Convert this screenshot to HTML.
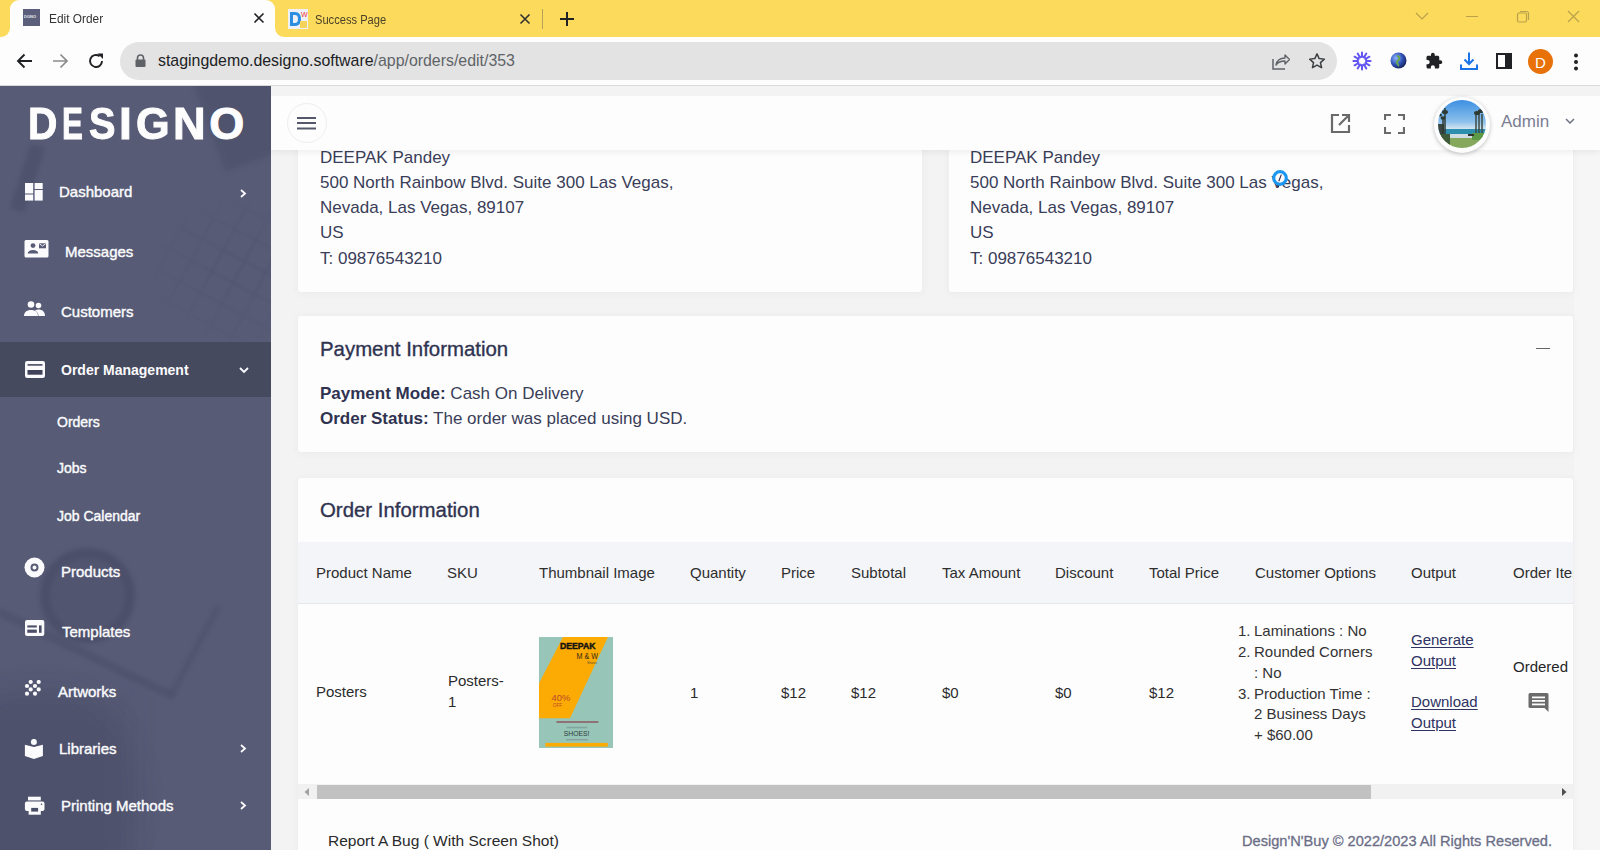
<!DOCTYPE html>
<html><head><meta charset="utf-8">
<style>
*{box-sizing:border-box;margin:0;padding:0}
html,body{width:1600px;height:850px;overflow:hidden;font-family:"Liberation Sans",sans-serif;background:#f3f3f4}
.abs{position:absolute}
.t{position:absolute;white-space:nowrap;line-height:1}
#tabbar{position:absolute;left:0;top:0;width:1600px;height:37px;background:#fcda5c}
#tab1{position:absolute;left:10px;top:0px;width:265px;height:37px;background:#fdfdfd;border-radius:9px 9px 0 0}
#tab1:before,#tab1:after{content:"";position:absolute;bottom:0;width:10px;height:10px;background:transparent}
#tab1:before{left:-10px;border-bottom-right-radius:9px;box-shadow:4px 4px 0 4px #fdfdfd}
#tab1:after{right:-10px;border-bottom-left-radius:9px;box-shadow:-4px 4px 0 4px #fdfdfd}
.tabtitle{position:absolute;font-size:12.5px;color:#333;top:12px;line-height:1}
#toolbar{position:absolute;left:0;top:37px;width:1600px;height:49px;background:#fdfdfd;border-bottom:1px solid #d9d9d9}
#omni{position:absolute;left:120px;top:5px;width:1217px;height:38px;background:#e3e3e3;border-radius:19px}
#url{position:absolute;left:38px;top:11px;font-size:15.9px;color:#202124;line-height:1}
#url span{color:#5f6368}
#sidebar{position:absolute;left:0;top:86px;width:271px;height:764px;background:#575b76;overflow:hidden}
.dl{position:absolute;top:15px;font-size:45px;font-weight:bold;line-height:1;color:#fdfdfd;-webkit-text-stroke:1px #fdfdfd;transform-origin:0 0}
.nl{position:absolute;color:#fbfbfd;font-size:15px;line-height:1;white-space:nowrap;-webkit-text-stroke:0.4px #fbfbfd}
#main{position:absolute;left:271px;top:86px;width:1329px;height:764px;background:#f3f3f4;overflow:hidden}
.card{position:absolute;background:#fdfdfe;border-radius:3px;box-shadow:0 1px 8px rgba(60,60,80,0.05)}
.addr{position:absolute;font-size:17px;color:#3a3e58;line-height:25px;white-space:nowrap}
#header{position:absolute;left:0;top:10px;width:1329px;height:54px;background:#fdfdfd;box-shadow:0 3px 5px rgba(0,0,0,0.05)}
.ttl{position:absolute;font-size:20.4px;color:#2f3350;line-height:1;white-space:nowrap;-webkit-text-stroke:0.35px #2f3350}
.th{position:absolute;font-size:15px;color:#2e2e2e;line-height:1;white-space:nowrap;top:0;margin:-1px 0 0 0}
.td{position:absolute;font-size:15px;color:#2b2b2b;line-height:1;white-space:nowrap}
.lnk{position:absolute;font-size:15px;color:#2e3361;line-height:1;white-space:nowrap;text-decoration:underline;text-underline-offset:2px}
</style></head><body>
<!-- ===== Browser tab bar ===== -->
<div id="tabbar">
  <div id="tab1">
    <div class="abs" style="left:13px;top:9px;width:17px;height:17px;background:#5b5f7c"></div>
    <div class="abs" style="left:14px;top:15px;font-size:4px;color:#e8e8f0;font-weight:bold;line-height:1">DGNO</div>
    <div class="tabtitle" style="left:39px;top:13px;transform:scaleX(0.95);transform-origin:0 0">Edit Order</div>
    <svg class="abs" style="left:243px;top:12px" width="12" height="12" viewBox="0 0 12 12"><path d="M1.5 1.5L10.5 10.5M10.5 1.5L1.5 10.5" stroke="#202124" stroke-width="1.6"/></svg>
  </div>
  <svg class="abs" style="left:288px;top:9px" width="20" height="20" viewBox="0 0 20 20">
    <rect x="0" y="0" width="20" height="20" fill="#eef1f7"/>
    <path d="M2 3h5c4 0 6 3 6 7s-2 7-6 7H2z" fill="#2c8ee0"/>
    <path d="M5 6h2c2 0 3 1.5 3 4s-1 4-3 4H5z" fill="#eef1f7"/>
    <text x="13" y="8" font-size="7" fill="#e33" font-family="Liberation Sans">W</text>
    <rect x="12" y="12" width="7" height="7" fill="#f5d35a"/>
  </svg>
  <div class="tabtitle" style="left:315px;top:13.5px;color:#4a4128;transform:scaleX(0.89);transform-origin:0 0">Success Page</div>
  <svg class="abs" style="left:519px;top:13px" width="12" height="12" viewBox="0 0 12 12"><path d="M1.5 1.5L10.5 10.5M10.5 1.5L1.5 10.5" stroke="#333" stroke-width="1.6"/></svg>
  <div class="abs" style="left:542px;top:9px;width:1px;height:20px;background:#b5a35a"></div>
  <svg class="abs" style="left:560px;top:12px" width="14" height="14" viewBox="0 0 14 14"><path d="M7 0V14M0 7H14" stroke="#202124" stroke-width="2"/></svg>
  <!-- window controls -->
  <svg class="abs" style="left:1415px;top:12px" width="14" height="9" viewBox="0 0 14 9"><path d="M1 1L7 7L13 1" stroke="#b9a24a" stroke-width="1.2" fill="none"/></svg>
  <div class="abs" style="left:1466px;top:16px;width:12px;height:1px;background:#b9a24a"></div>
  <svg class="abs" style="left:1516px;top:10px" width="14" height="14" viewBox="0 0 14 14"><rect x="1.5" y="3" width="9" height="9" rx="1.5" stroke="#b9a24a" stroke-width="1.2" fill="none"/><path d="M4 1.5h6.5a2 2 0 0 1 2 2V10" stroke="#b9a24a" stroke-width="1.2" fill="none"/></svg>
  <svg class="abs" style="left:1567px;top:10px" width="13" height="13" viewBox="0 0 13 13"><path d="M1 1L12 12M12 1L1 12" stroke="#b9a24a" stroke-width="1.2"/></svg>
</div>
<!-- ===== Toolbar ===== -->
<div id="toolbar">
  <svg class="abs" style="left:16px;top:16px" width="17" height="16" viewBox="0 0 17 16"><path d="M16 8H2M8.5 1.5L2 8l6.5 6.5" stroke="#202124" stroke-width="1.9" fill="none"/></svg>
  <svg class="abs" style="left:52px;top:16px" width="17" height="16" viewBox="0 0 17 16"><path d="M1 8H15M8.5 1.5L15 8l-6.5 6.5" stroke="#8a8a8a" stroke-width="1.7" fill="none"/></svg>
  <svg class="abs" style="left:87px;top:15px" width="18" height="18" viewBox="0 0 18 18"><path d="M15 9A6 6 0 1 1 12.6 4.2" stroke="#202124" stroke-width="1.9" fill="none"/><path d="M10.5 1.5L16 1.5L16 7z" fill="#202124"/></svg>
  <div id="omni">
    <svg class="abs" style="left:15px;top:12px" width="11" height="13" viewBox="0 0 11 13"><path d="M2.5 6V4a3 3 0 0 1 6 0v2" stroke="#5f6368" stroke-width="1.6" fill="none"/><rect x="0.5" y="5.5" width="10" height="7.5" rx="1" fill="#5f6368"/></svg>
    <div id="url">stagingdemo.designo.software<span>/app/orders/edit/353</span></div>
    <svg class="abs" style="left:1152px;top:11px" width="18" height="17" viewBox="0 0 18 17"><path d="M1 6v10h12" stroke="#5f6368" stroke-width="1.5" fill="none"/><path d="M4 12c1-5 5-7 9-7V2l4.5 4.5L13 11V8c-4 0-7 1-9 4z" stroke="#5f6368" stroke-width="1.4" fill="none" stroke-linejoin="round"/></svg>
    <svg class="abs" style="left:1188px;top:10px" width="18" height="18" viewBox="0 0 24 24"><path d="M12 2.5l2.9 6.3 6.9.7-5.2 4.6 1.5 6.8L12 17.4l-6.1 3.5 1.5-6.8-5.2-4.6 6.9-.7z" stroke="#3c4043" stroke-width="2" fill="none" stroke-linejoin="round"/></svg>
  </div>
  <!-- extension icons -->
  <svg class="abs" style="left:1352px;top:14px" width="20" height="20" viewBox="0 0 20 20"><path d="M14.00 10.00L18.60 10.00M13.46 12.00L17.45 14.30M12.00 13.46L14.30 17.45M10.00 14.00L10.00 18.60M8.00 13.46L5.70 17.45M6.54 12.00L2.55 14.30M6.00 10.00L1.40 10.00M6.54 8.00L2.55 5.70M8.00 6.54L5.70 2.55M10.00 6.00L10.00 1.40M12.00 6.54L14.30 2.55M13.46 8.00L17.45 5.70" stroke="#6355f2" stroke-width="2" stroke-linecap="round"/><circle cx="10" cy="10" r="4.6" stroke="#6355f2" stroke-width="1.6" fill="none"/></svg>
  <svg class="abs" style="left:1390px;top:15px" width="17" height="17" viewBox="0 0 17 17"><defs><radialGradient id="gl" cx="35%" cy="35%" r="70%"><stop offset="0" stop-color="#8fb4ff"/><stop offset="0.6" stop-color="#2e4fb5"/><stop offset="1" stop-color="#17245a"/></radialGradient></defs><circle cx="8.5" cy="8.5" r="8" fill="url(#gl)"/><path d="M7 4c2 0 3 2 2 3.5S6 9 7 11s2 2 1 3" stroke="#6aa84f" stroke-width="2" fill="none"/></svg>
  <svg class="abs" style="left:1425px;top:15px" width="18" height="18" viewBox="0 0 24 24"><path d="M20.5 11H19V7c0-1.1-.9-2-2-2h-4V3.5C13 2.1 11.9 1 10.5 1S8 2.1 8 3.5V5H4c-1.1 0-2 .9-2 2v3.8h1.5c1.5 0 2.7 1.2 2.7 2.7S5 16.2 3.5 16.2H2V20c0 1.1.9 2 2 2h3.8v-1.5c0-1.500 1.200-2.700 2.700-2.700s2.700 1.200 2.700 2.700V22H17c1.1 0 2-.9 2-2v-4h1.5c1.4 0 2.500-1.100 2.500-2.500S21.900 11 20.500 11z" fill="#202124"/></svg>
  <svg class="abs" style="left:1459px;top:14px" width="20" height="20" viewBox="0 0 20 20"><path d="M10 1.5v11M5.5 8.5L10 13l4.5-4.5" stroke="#1a73e8" stroke-width="2" fill="none"/><path d="M2 13.5v4.5h16v-4.5" stroke="#1a73e8" stroke-width="2" fill="none"/></svg>
  <svg class="abs" style="left:1496px;top:16px" width="16" height="16" viewBox="0 0 16 16"><rect x="1" y="1" width="14" height="14" stroke="#202124" stroke-width="2" fill="none"/><rect x="9" y="1" width="6" height="14" fill="#202124"/></svg>
  <div class="abs" style="left:1528px;top:12px;width:25px;height:25px;border-radius:50%;background:#e8710a"></div>
  <div class="t" style="left:1535px;top:18px;font-size:15px;color:#fff">D</div>
  <svg class="abs" style="left:1573px;top:16px" width="6" height="18" viewBox="0 0 6 18"><circle cx="3" cy="2.5" r="2" fill="#202124"/><circle cx="3" cy="9" r="2" fill="#202124"/><circle cx="3" cy="15.5" r="2" fill="#202124"/></svg>
</div>
<!-- ===== Sidebar ===== -->
<div id="sidebar">
  <div class="abs" style="left:205px;top:-30px;width:110px;height:100px;background:rgba(35,38,62,0.15);transform:rotate(-20deg);filter:blur(3px)"></div>
  <div class="abs" style="left:150px;top:110px;width:130px;height:150px;background:repeating-linear-gradient(28deg,transparent 0 22px,rgba(35,38,62,0.07) 22px 24px),repeating-linear-gradient(-62deg,transparent 0 22px,rgba(35,38,62,0.07) 22px 24px);filter:blur(0.8px);-webkit-mask-image:radial-gradient(ellipse at 70% 50%,#000 20%,transparent 70%)"></div>
  <div class="abs" style="left:20px;top:58px;width:15px;height:68px;background:rgba(35,38,62,0.17);transform:rotate(18deg);filter:blur(2.5px)"></div>
  <div class="abs" style="left:40px;top:462px;width:95px;height:95px;border-radius:50%;border:10px solid rgba(35,38,62,0.13);background:rgba(35,38,62,0.10);filter:blur(2px)"></div>
  <div class="abs" style="left:0px;top:522px;width:196px;height:8px;background:rgba(35,38,62,0.15);transform:rotate(25.8deg);transform-origin:0 0;filter:blur(2px)"></div>
  <div class="abs" style="left:222px;top:521px;width:100px;height:7px;background:rgba(35,38,62,0.12);transform:rotate(118deg);transform-origin:0 0;filter:blur(2px)"></div>
  <div class="abs" style="left:-30px;top:610px;width:160px;height:240px;background:rgba(35,38,62,0.08);filter:blur(14px)"></div>
  
  <div class="abs" style="left:-60px;top:600px;width:200px;height:220px;border-radius:50%;background:rgba(35,38,62,0.10);filter:blur(12px)"></div>
  <div class="abs" style="left:0;top:256px;width:271px;height:55px;background:#464a5f"></div>
  <div class="dl" style="left:28.1px;transform:scaleX(0.903)">D</div>
<div class="dl" style="left:62.2px;transform:scaleX(0.696)">E</div>
<div class="dl" style="left:89.0px;transform:scaleX(0.882)">S</div>
<div class="dl" style="left:119.4px;transform:scaleX(1.025)">I</div>
<div class="dl" style="left:135.8px;transform:scaleX(0.961)">G</div>
<div class="dl" style="left:173.0px;transform:scaleX(1.004)">N</div>
<div class="dl" style="left:209.3px;transform:scaleX(1.000)">O</div>
  <!-- Dashboard -->
  <svg class="abs" style="left:25px;top:97px" width="18" height="18" viewBox="0 0 18 18" fill="#fbfbfd"><rect x="0" y="0" width="8.2" height="10.5"/><rect x="0" y="11.5" width="8.2" height="6.1"/><rect x="9.6" y="0" width="8.1" height="6"/><rect x="9.6" y="7" width="8.1" height="10.6"/></svg>
  <div class="nl" style="left:59px;top:98px">Dashboard</div>
  <svg class="abs" style="left:240px;top:103px" width="7" height="9" viewBox="0 0 7 9"><path d="M1 1l4 3.5L1 8" stroke="#fbfbfd" stroke-width="1.8" fill="none"/></svg>
  <!-- Messages -->
  <svg class="abs" style="left:24px;top:154px" width="25" height="18" viewBox="0 0 25 18"><rect x="0.5" y="0" width="24" height="17.5" rx="1.5" fill="#fbfbfd"/><circle cx="9" cy="5.6" r="2.4" fill="#575b76"/><path d="M3.7 13.6c0-2.400 2.400-3.600 5.300-3.600s5.300 1.200 5.300 3.600z" fill="#575b76"/><rect x="15" y="3.3" width="7" height="5" fill="#575b76"/><path d="M15.3 3.700l3.200 2.300 3.200-2.300" stroke="#fbfbfd" stroke-width="0.9" fill="none"/></svg>
  <div class="nl" style="left:65px;top:158px">Messages</div>
  <!-- Customers -->
  <svg class="abs" style="left:24px;top:215px" width="21" height="15" viewBox="0 0 21 15" fill="#fbfbfd"><circle cx="7" cy="3.5" r="3.3"/><circle cx="14.5" cy="4.5" r="2.8"/><path d="M0 15c0-4 3-6 7-6s7 2 7 6z"/><path d="M11 9.5c1-.6 2.200-.9 3.500-.9 3.500 0 6.500 2 6.500 6.400h-6.500c0-2-1-4-3.500-5.500z"/></svg>
  <div class="nl" style="left:61px;top:218px">Customers</div>
  <!-- Order Management -->
  <svg class="abs" style="left:25px;top:275px" width="20" height="17" viewBox="0 0 20 17"><rect x="0" y="0" width="20" height="17" rx="2.2" fill="#fbfbfd"/><rect x="2.5" y="3" width="15" height="1.8" fill="#5c5f72"/><rect x="2.5" y="9" width="15" height="4.7" fill="#3f4259"/></svg>
  <div class="nl" style="left:61px;top:277px;font-size:14px;font-weight:bold;-webkit-text-stroke:0">Order Management</div>
  <svg class="abs" style="left:239px;top:281px" width="10" height="7" viewBox="0 0 10 7"><path d="M1 1l4 4 4-4" stroke="#fbfbfd" stroke-width="1.8" fill="none"/></svg>
  <div class="nl" style="left:57px;top:329px;font-size:14px">Orders</div>
  <div class="nl" style="left:57px;top:375px;font-size:14px">Jobs</div>
  <div class="nl" style="left:57px;top:423px;font-size:14px">Job Calendar</div>
  <!-- Products -->
  <svg class="abs" style="left:24px;top:471px" width="21" height="21" viewBox="0 0 21 21"><circle cx="10.5" cy="10.5" r="10" fill="#fbfbfd"/><circle cx="10.5" cy="10.5" r="3" stroke="#575b76" stroke-width="2" fill="none"/></svg>
  <div class="nl" style="left:61px;top:478px">Products</div>
  <!-- Templates -->
  <svg class="abs" style="left:25px;top:534px" width="20" height="16" viewBox="0 0 20 16"><rect x="0" y="0" width="19.3" height="16" rx="2" fill="#fbfbfd"/><rect x="2.3" y="5.4" width="9.5" height="2.1" fill="#4a4e66"/><rect x="2.3" y="9.6" width="9.5" height="3.2" fill="#4a4e66"/><rect x="14" y="5.4" width="2.6" height="7.4" fill="#4a4e66"/></svg>
  <div class="nl" style="left:62px;top:538px">Templates</div>
  <!-- Artworks -->
  <svg class="abs" style="left:24px;top:594px" width="18" height="16" viewBox="0 0 18 16" fill="#fbfbfd"><circle cx="6.7" cy="2" r="2.1"/><circle cx="14.7" cy="2" r="2.1"/><circle cx="3" cy="6" r="2.1"/><circle cx="11" cy="6" r="2.1"/><circle cx="6.7" cy="9.4" r="2.1"/><circle cx="14.7" cy="9.4" r="2.1"/><circle cx="3" cy="13.7" r="2.1"/><circle cx="11" cy="13.7" r="2.1"/></svg>
  <div class="nl" style="left:58px;top:598px">Artworks</div>
  <!-- Libraries -->
  <svg class="abs" style="left:24px;top:653px" width="20" height="21" viewBox="0 0 20 21" fill="#fbfbfd"><circle cx="9.9" cy="2.9" r="3"/><path d="M0.9 5.8L9.9 8L18.9 5.8V17L9.9 20.1L0.9 17Z"/></svg>
  <div class="nl" style="left:59px;top:655px">Libraries</div>
  <svg class="abs" style="left:240px;top:658px" width="7" height="9" viewBox="0 0 7 9"><path d="M1 1l4 3.5L1 8" stroke="#fbfbfd" stroke-width="1.8" fill="none"/></svg>
  <!-- Printing Methods -->
  <svg class="abs" style="left:24px;top:710px" width="21" height="19" viewBox="0 0 21 19"><rect x="4" y="0.7" width="12.8" height="3.7" fill="#fbfbfd"/><rect x="0.9" y="5.6" width="19.6" height="9.4" rx="2" fill="#fbfbfd"/><rect x="4.6" y="11.3" width="12.2" height="7.4" fill="#fbfbfd"/><rect x="7.2" y="11.9" width="6.9" height="3.7" fill="#4a4e66"/><circle cx="17.5" cy="8.2" r="0.8" fill="#4a4e66"/></svg>
  <div class="nl" style="left:61px;top:712px">Printing Methods</div>
  <svg class="abs" style="left:240px;top:715px" width="7" height="9" viewBox="0 0 7 9"><path d="M1 1l4 3.5L1 8" stroke="#fbfbfd" stroke-width="1.8" fill="none"/></svg>
</div>
<!-- ===== Main ===== -->
<div id="main">
  <div class="abs" style="left:1303px;top:0;width:26px;height:764px;background:#f6f6f7"></div>
  <!-- address cards (scrolled) -->
  <div class="card" style="left:27px;top:-40px;width:624px;height:246px"></div>
  <div class="card" style="left:678px;top:-40px;width:624px;height:246px"></div>
  <div class="addr" style="left:49px;top:59px">DEEPAK Pandey<br>500 North Rainbow Blvd. Suite 300 Las Vegas,<br>Nevada, Las Vegas, 89107<br>US<br><span style="position:relative;top:1px">T: 09876543210</span></div>
  <div class="addr" style="left:699px;top:59px">DEEPAK Pandey<br>500 North Rainbow Blvd. Suite 300 Las Vegas,<br>Nevada, Las Vegas, 89107<br>US<br><span style="position:relative;top:1px">T: 09876543210</span></div>
  <!-- cursor -->
  <svg class="abs" style="left:1000px;top:83px" width="18" height="20" viewBox="0 0 18 20"><path d="M5.5 15.500L7.400 18.600L9 15.500z" fill="#222"/><circle cx="9" cy="9" r="6.3" stroke="#1c98f2" stroke-width="3.2" fill="#fdfdfe"/><path d="M10.300 5.600L7.800 12.200" stroke="#3a3050" stroke-width="1.200"/></svg>
  <!-- payment card -->
  <div class="card" style="left:27px;top:230px;width:1275px;height:136px"></div>
  <div class="ttl" style="left:49px;top:253px">Payment Information</div>
  <div class="abs" style="left:1265px;top:262px;width:14px;height:1.3px;background:#666"></div>
  <div class="addr" style="left:49px;top:295px;font-size:17px"><b style="color:#2f3350">Payment Mode:</b> Cash On Delivery<br><b style="color:#2f3350">Order Status:</b> The order was placed using USD.</div>
  <!-- order card -->
  <div class="card" style="left:27px;top:392px;width:1275px;height:420px;border-radius:3px 3px 0 0"></div>
  <div class="ttl" style="left:49px;top:414px">Order Information</div>
  <div class="abs" style="left:27px;top:456px;width:1275px;height:62px;background:#f4f5f9;border-bottom:1px solid #e6e7eb"></div>
  <div class="th" style="left:45px;top:480px">Product Name</div>
  <div class="th" style="left:176px;top:480px">SKU</div>
  <div class="th" style="left:268px;top:480px">Thumbnail Image</div>
  <div class="th" style="left:419px;top:480px">Quantity</div>
  <div class="th" style="left:510px;top:480px">Price</div>
  <div class="th" style="left:580px;top:480px">Subtotal</div>
  <div class="th" style="left:671px;top:480px">Tax Amount</div>
  <div class="th" style="left:784px;top:480px">Discount</div>
  <div class="th" style="left:878px;top:480px">Total Price</div>
  <div class="th" style="left:984px;top:480px">Customer Options</div>
  <div class="th" style="left:1140px;top:480px">Output</div>
  <div class="abs" style="left:1242px;top:470px;width:60px;height:30px;overflow:hidden"><div class="th" style="left:0;top:10px">Order Item Status</div></div>
  <!-- row -->
  <div class="td" style="left:45px;top:598px">Posters</div>
  <div class="td" style="left:177px;top:589px;line-height:20.5px;top:585px">Posters-<br>1</div>
  <svg class="abs" style="left:268px;top:551px" width="74" height="111" viewBox="0 0 74 111">
    <rect width="74" height="111" fill="#97c6b8"/>
    <path d="M24 0H69L31 81.3H0V46.3z" fill="#fcab05"/>
    <text x="21" y="11.8" font-family="Liberation Sans" font-weight="bold" font-size="8.2" fill="#111" textLength="35.5" lengthAdjust="spacingAndGlyphs" stroke="#111" stroke-width="0.4">DEEPAK</text>
    <text x="37.6" y="22" font-family="Liberation Sans" font-size="8.6" fill="#3a2a10" textLength="21.5" lengthAdjust="spacingAndGlyphs">M &amp; W</text>
    <text x="48" y="27" font-family="Liberation Sans" font-size="3.5" fill="#5a4a30" textLength="10" lengthAdjust="spacingAndGlyphs">Shoes</text>
    <text x="12.6" y="64" font-family="Liberation Sans" font-size="9.8" fill="#b94a2a" textLength="18.7" lengthAdjust="spacingAndGlyphs">40%</text>
    <text x="13.7" y="70" font-family="Liberation Sans" font-size="5.8" fill="#b94a2a" textLength="9.5" lengthAdjust="spacingAndGlyphs">OFF</text>
    <rect x="17.4" y="84" width="42" height="2" fill="#8a3a4a" opacity="0.6"/>
    <rect x="27.6" y="89.8" width="20.6" height="1.5" fill="#556" opacity="0.3"/>
    <text x="24.7" y="99.3" font-family="Liberation Sans" font-size="7" fill="#2f3a38" textLength="25.7" lengthAdjust="spacingAndGlyphs">SHOES!</text>
    <rect x="27" y="102" width="22" height="1.5" fill="#556" opacity="0.3"/>
    <rect x="6.3" y="105.9" width="62.5" height="3.7" fill="#fcab05"/>
  </svg>
  <div class="td" style="left:419px;top:599px">1</div>
  <div class="td" style="left:510px;top:599px">$12</div>
  <div class="td" style="left:580px;top:599px">$12</div>
  <div class="td" style="left:671px;top:599px">$0</div>
  <div class="td" style="left:784px;top:599px">$0</div>
  <div class="td" style="left:878px;top:599px">$12</div>
  <div class="td" style="left:967px;top:535px;line-height:20.85px;color:#333">1.<br>2.<br><br>3.</div>
  <div class="td" style="left:983px;top:535px;line-height:20.85px;color:#333">Laminations : No<br>Rounded Corners<br>: No<br>Production Time :<br>2 Business Days<br>+ $60.00</div>
  <div class="lnk" style="left:1140px;top:544px;line-height:20.6px">Generate<br>Output</div>
  <div class="lnk" style="left:1140px;top:606px;line-height:20.6px">Download<br>Output</div>
  <div class="td" style="left:1242px;top:573px;color:#262626">Ordered</div>
  <svg class="abs" style="left:1257px;top:606px" width="21" height="21" viewBox="0 0 21 21"><path d="M2 1h17a1.5 1.5 0 0 1 1.5 1.5V20L16.500 16H2A1.500 1.500 0 0 1 .5 14.500V2.500A1.500 1.500 0 0 1 2 1z" fill="#6b6b6b"/><rect x="4" y="4.5" width="13" height="1.8" fill="#fdfdfe"/><rect x="4" y="8" width="13" height="1.8" fill="#fdfdfe"/><rect x="4" y="11.5" width="13" height="1.8" fill="#fdfdfe"/></svg>
  <!-- scrollbar -->
  <div class="abs" style="left:27px;top:698px;width:1275px;height:15px;background:#f1f1f1"></div>
  <div class="abs" style="left:46px;top:699px;width:1054px;height:14px;background:#c1c1c1"></div>
  <svg class="abs" style="left:32px;top:701px" width="8" height="10" viewBox="0 0 8 10"><path d="M6 1L1.5 5 6 9z" fill="#a3a3a3"/></svg>
  <svg class="abs" style="left:1289px;top:701px" width="8" height="10" viewBox="0 0 8 10"><path d="M2 1l4.500 4L2 9z" fill="#505050"/></svg>
  <!-- footer -->
  <div class="td" style="left:57px;top:747px;font-size:15.5px;color:#2a2a2a">Report A Bug ( With Screen Shot)</div>
  <div class="td" style="left:971px;top:748px;font-size:14.6px;color:#6b6e86;-webkit-text-stroke:0.3px #6b6e86">Design'N'Buy © 2022/2023 All Rights Reserved.</div>
  <!-- app header -->
  <div class="abs" style="left:0;top:0;width:1329px;height:10px;background:#f3f3f4"></div>
  <div id="header">
    <div class="abs" style="left:16px;top:7px;width:40px;height:40px;border-radius:50%;border:1px solid #eeeeef;background:#fdfdfd"></div>
    <svg class="abs" style="left:26px;top:20px" width="20" height="14" viewBox="0 0 20 14"><path d="M0 2h19M0 7h19M0 12.500h19" stroke="#55586b" stroke-width="2"/></svg>
    <svg class="abs" style="left:1059px;top:17px" width="21" height="21" viewBox="0 0 21 21"><path d="M9 2H2v17h17v-7" stroke="#6a6a6a" stroke-width="2.200" fill="none"/><path d="M12 2h7v7M19 2L9 12" stroke="#6a6a6a" stroke-width="2.200" fill="none"/></svg>
    <svg class="abs" style="left:1113px;top:18px" width="21" height="20" viewBox="0 0 21 20"><path d="M1 6V1h6M14 1h6v5M20 13v6h-6M7 19H1v-6" stroke="#6a6a6a" stroke-width="2.200" fill="none"/></svg>
    <div class="abs" style="left:1163px;top:1px;width:56px;height:56px;border-radius:50%;background:#fdfdfd;box-shadow:0 1px 4px rgba(0,0,0,0.25)"></div>
    <svg class="abs" style="left:1167px;top:4px" width="48" height="48" viewBox="0 0 48 48">
      <defs><clipPath id="av"><circle cx="24" cy="24" r="24"/></clipPath>
      <linearGradient id="sky" x1="0" y1="0" x2="0" y2="1"><stop offset="0" stop-color="#3d8fe2"/><stop offset="0.45" stop-color="#8cc0ec"/><stop offset="0.62" stop-color="#dbe9f2"/></linearGradient></defs>
      <g clip-path="url(#av)">
        <rect width="48" height="48" fill="url(#sky)"/>
        <rect y="29" width="48" height="5" fill="#2d8eae"/>
        <rect y="34" width="48" height="5" fill="#cfdde2"/>
        <rect y="38" width="48" height="10" fill="#86a85c"/>
        <path d="M0 24h6v24H0z" fill="#3a4540"/>
        <path d="M7 8v28M5 18v20" stroke="#2f3a33" stroke-width="1.5"/>
        <ellipse cx="7" cy="12" rx="3" ry="2" fill="#2f3a33"/><ellipse cx="5" cy="18" rx="2.5" ry="1.8" fill="#2f3a33"/><ellipse cx="2" cy="15" rx="2" ry="1.5" fill="#2f3a33"/>
        <path d="M38 12v26M41 10v26M44 14v24" stroke="#3d4a42" stroke-width="1.5"/>
        <ellipse cx="39" cy="13" rx="3" ry="2" fill="#2f3a33"/><ellipse cx="43" cy="11" rx="3" ry="2" fill="#2f3a33"/>
        <path d="M34 33h14v7H34z" fill="#5d9a45"/>
        <path d="M0 34h12v14H0z" fill="#3f5a38"/>
        <rect x="30" y="34" width="6" height="2" fill="#333"/>
      </g>
    </svg>
    <div class="t" style="left:1230px;top:17px;font-size:17px;color:#7b7e92">Admin</div>
    <svg class="abs" style="left:1294px;top:22px" width="10" height="6" viewBox="0 0 10 6"><path d="M1 1l4 4 4-4" stroke="#6f7285" stroke-width="1.500" fill="none"/></svg>
  </div>
  <!-- right gutter -->
</div>
</body></html>
